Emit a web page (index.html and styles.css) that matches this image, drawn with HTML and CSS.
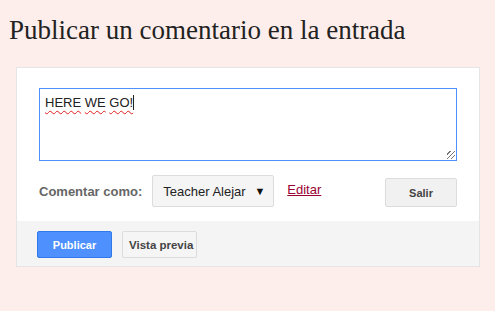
FILE: index.html
```html
<!DOCTYPE html>
<html lang="es">
<head>
    <meta charset="UTF-8">
    <title>Publicar un comentario</title>
    <link rel="stylesheet" href="styles.css">
</head>
<body>

<h4 class="comments-title">Publicar un comentario en la entrada</h4>

<div class="comment-form">
    <div class="comment-body">
        <div class="comment-box">
            <span class="typed">HERE</span> <span class="typed">WE</span> <span class="typed">GO!</span><span class="caret"></span>
            <span class="grip"></span>
        </div>
        <div class="identity-row">
            <span class="identity-label">Comentar como:</span>
            <div class="identity-select">
                <span>Teacher Alejar</span>
                <span class="arrow">&#9660;</span>
            </div>
            <a href="#" class="edit-link">Editar</a>
            <button class="btn btn-light logout-btn">Salir</button>
        </div>
    </div>
    <div class="comment-footer">
        <button class="btn btn-blue">Publicar</button>
        <button class="btn btn-light preview-btn">Vista previa</button>
    </div>
</div>

</body>
</html>
```

FILE: styles.css
```css
body {
    margin: 0;
    padding: 0 15px 0 16px;
    background-color: #fdeeeb;
    font-family: "Liberation Sans", Arial, sans-serif;
}

.comments-title {
    font-family: "Liberation Serif", Georgia, serif;
    font-weight: normal;
    font-size: 27px;
    line-height: 30px;
    color: #222;
    margin: 0 0 0 -7px;
    padding-top: 15px;
    height: 67px;
    box-sizing: border-box;
}

.comment-form {
    border: 1px solid #e5e5e5;
    background: #fff;
}

.comment-body {
    padding: 20px 22px 14px 22px;
}

.comment-box {
    position: relative;
    box-sizing: border-box;
    width: 418px;
    height: 73px;
    border: 1px solid #4d90fe;
    padding: 6px 5px;
    font-size: 13px;
    color: #222;
    line-height: 16px;
}

.typed {
    text-decoration: underline wavy #e02020;
    text-decoration-thickness: 1px;
    text-underline-offset: 3px;
}

.caret {
    display: inline-block;
    width: 1px;
    height: 15px;
    background: #222;
    vertical-align: -3px;
}

.grip {
    position: absolute;
    right: 1px;
    bottom: 1px;
    width: 8px;
    height: 8px;
    background: repeating-linear-gradient(135deg, transparent 0 2px, #777 2px 3px);
}

.identity-row {
    display: flex;
    align-items: center;
    margin-top: 14px;
}

.identity-label {
    font-size: 13px;
    font-weight: bold;
    color: #666;
    margin-right: 10px;
}

.identity-select {
    box-sizing: border-box;
    display: flex;
    align-items: center;
    justify-content: space-between;
    width: 122px;
    height: 32px;
    padding: 0 8px 0 10px;
    background: #f5f5f5;
    border: 1px solid #dcdcdc;
    border-radius: 2px;
    font-size: 13px;
    color: #222;
}

.arrow {
    font-size: 11px;
    color: #111;
}

.edit-link {
    font-size: 13px;
    color: #990033;
    margin-left: 13px;
    margin-top: -4px;
}

.btn {
    box-sizing: border-box;
    height: 27px;
    border-radius: 2px;
    font-family: "Liberation Sans", Arial, sans-serif;
    font-size: 11px;
    font-weight: bold;
    padding: 0;
    cursor: pointer;
}

.btn-light {
    background: #f5f5f5;
    border: 1px solid #dcdcdc;
    color: #444;
}

.btn-blue {
    background: #4d90fe;
    border: 1px solid #3079ed;
    color: #fff;
}

.logout-btn {
    width: 72px;
    height: 29px;
    margin-left: auto;
    margin-top: 3px;
    background: #f1f1f1;
}

.comment-footer {
    display: flex;
    gap: 10px;
    background: #f4f4f4;
    padding: 10px 20px 8px;
}

.comment-footer .btn {
    width: 75px;
}

.comment-footer .preview-btn {
    font-size: 11.5px;
    text-align: left;
    padding-left: 6px;
    overflow: hidden;
    white-space: nowrap;
}
```
